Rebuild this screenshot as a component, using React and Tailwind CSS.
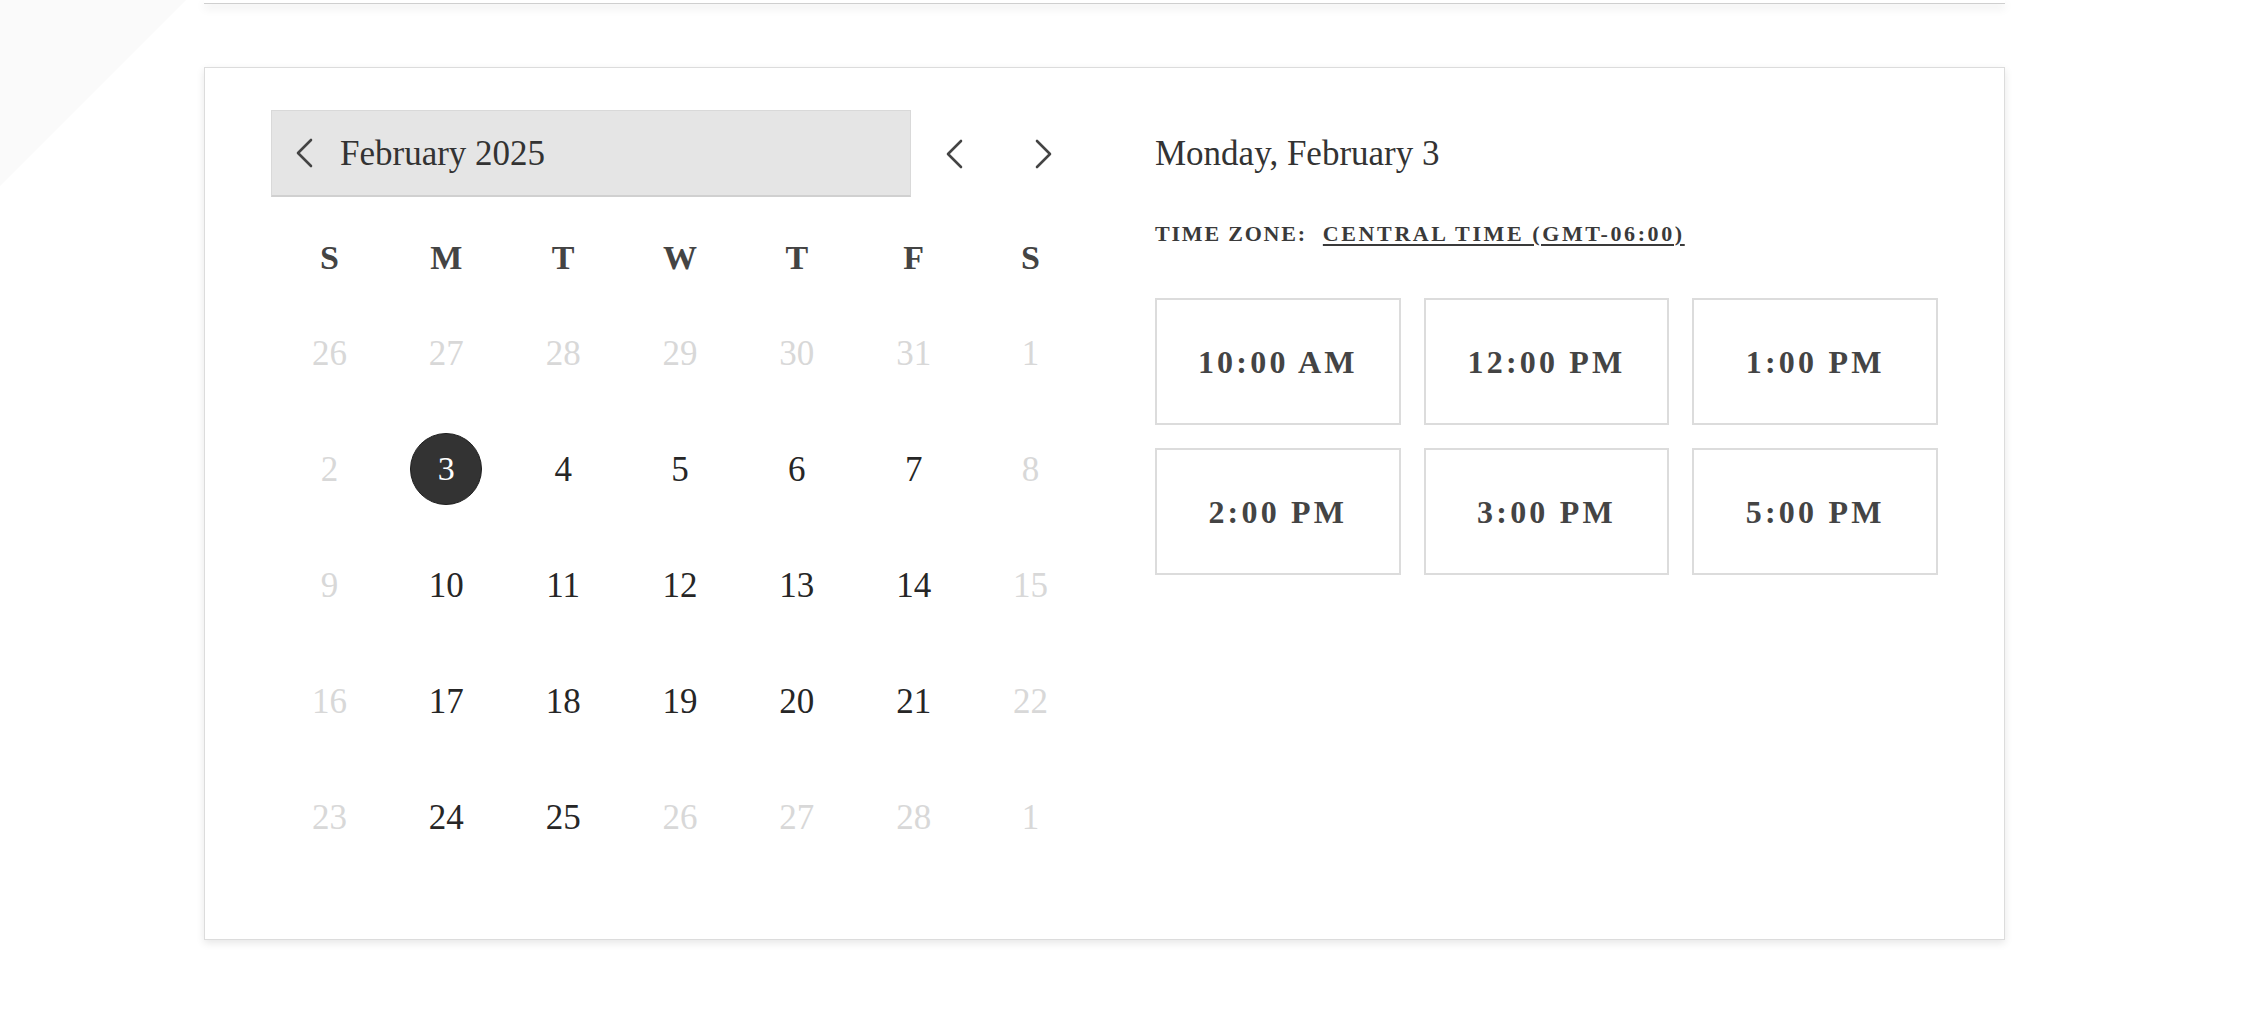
import React from "react";

const serif = { fontFamily: '"Liberation Serif", "Times New Roman", serif' };

function Chevron({ dir = "left" }) {
  return (
    <svg width="22" height="30" viewBox="0 0 22 30" fill="none">
      {dir === "left" ? (
        <polyline points="17,2 4,15 17,28" stroke="#444" strokeWidth="2.6" strokeLinecap="round" strokeLinejoin="round" />
      ) : (
        <polyline points="5,2 18,15 5,28" stroke="#444" strokeWidth="2.6" strokeLinecap="round" strokeLinejoin="round" />
      )}
    </svg>
  );
}

const weeks = [
  [[26, 0], [27, 0], [28, 0], [29, 0], [30, 0], [31, 0], [1, 0]],
  [[2, 0], [3, 2], [4, 1], [5, 1], [6, 1], [7, 1], [8, 0]],
  [[9, 0], [10, 1], [11, 1], [12, 1], [13, 1], [14, 1], [15, 0]],
  [[16, 0], [17, 1], [18, 1], [19, 1], [20, 1], [21, 1], [22, 0]],
  [[23, 0], [24, 1], [25, 1], [26, 0], [27, 0], [28, 0], [1, 0]],
];

const days = ["S", "M", "T", "W", "T", "F", "S"];
const slots = ["10:00 AM", "12:00 PM", "1:00 PM", "2:00 PM", "3:00 PM", "5:00 PM"];

export default function App() {
  return (
    <div className="relative h-[1034px] w-full overflow-hidden bg-white" style={serif}>
      <svg className="absolute left-0 top-0" width="200" height="200" viewBox="0 0 200 200">
        <polygon points="0,0 186,0 0,186" fill="#fafafa" />
      </svg>
      <div className="relative pl-[204px]">
        <div className="h-[4px] w-[1801px] border-b border-[#cfcfcf] bg-white shadow-[0_4px_10px_rgba(0,0,0,0.10)]" />
        <div className="mt-[63px] w-[1801px] h-[873px] border border-[#dcdcdc] bg-white shadow-[0_3px_8px_rgba(0,0,0,0.10)] pt-[42px] px-[66px]">
          <div className="flex gap-[66px]">
            {/* Left: calendar */}
            <div className="w-[819px]">
              <div className="flex h-[87px] items-center">
                <div className="flex h-full w-[640px] items-center border border-[#d9d9d9] border-b-2 border-b-[#d0d0d0] bg-[#e5e5e5] pl-[22px]">
                  <Chevron dir="left" />
                  <span className="ml-[24px] text-[35px] leading-none text-[#333]">February 2025</span>
                </div>
                <button className="ml-[22px] flex h-[44px] w-[44px] items-center justify-center">
                  <Chevron dir="left" />
                </button>
                <button className="ml-[44px] flex h-[44px] w-[44px] items-center justify-center">
                  <Chevron dir="right" />
                </button>
              </div>
              <div className="mt-[23px] grid h-[75px] grid-cols-7 items-center">
                {days.map((d, i) => (
                  <div key={i} className="text-center text-[34px] font-bold leading-none text-[#444]">
                    {d}
                  </div>
                ))}
              </div>
              <div className="grid grid-cols-7">
                {weeks.flat().map(([n, s], i) => (
                  <div key={i} className="flex h-[116px] items-center justify-center">
                    {s === 2 ? (
                      <div className="flex h-[72px] w-[72px] items-center justify-center rounded-full border border-[#1e1e1e] bg-[#333] text-[34px] leading-none text-white">
                        {n}
                      </div>
                    ) : (
                      <span className={`text-[35px] leading-none ${s === 1 ? "text-[#262626]" : "text-[#d8d8d8]"}`}>
                        {n}
                      </span>
                    )}
                  </div>
                ))}
              </div>
            </div>
            {/* Right: times */}
            <div className="flex-1">
              <div className="flex h-[87px] items-center">
                <span className="text-[35px] leading-none text-[#333]">Monday, February 3</span>
              </div>
              <div className="mt-[20px] flex h-[32px] items-center text-[22px] font-bold uppercase text-[#3a3a3a]">
                <span className="tracking-[1.8px]">Time Zone:</span>
                <span className="ml-[16px] tracking-[2.6px] underline decoration-[1.5px] underline-offset-[3px]">Central Time (GMT-06:00)</span>
              </div>
              <div className="mt-[49px] grid w-[783px] grid-cols-3 gap-[23px]">
                {slots.map((t) => (
                  <div key={t} className="flex h-[127px] items-center justify-center border-2 border-[#dcdcdc] bg-white text-[32px] font-bold leading-none tracking-[3.2px] text-[#444]">
                    {t}
                  </div>
                ))}
              </div>
            </div>
          </div>
        </div>
      </div>
    </div>
  );
}
